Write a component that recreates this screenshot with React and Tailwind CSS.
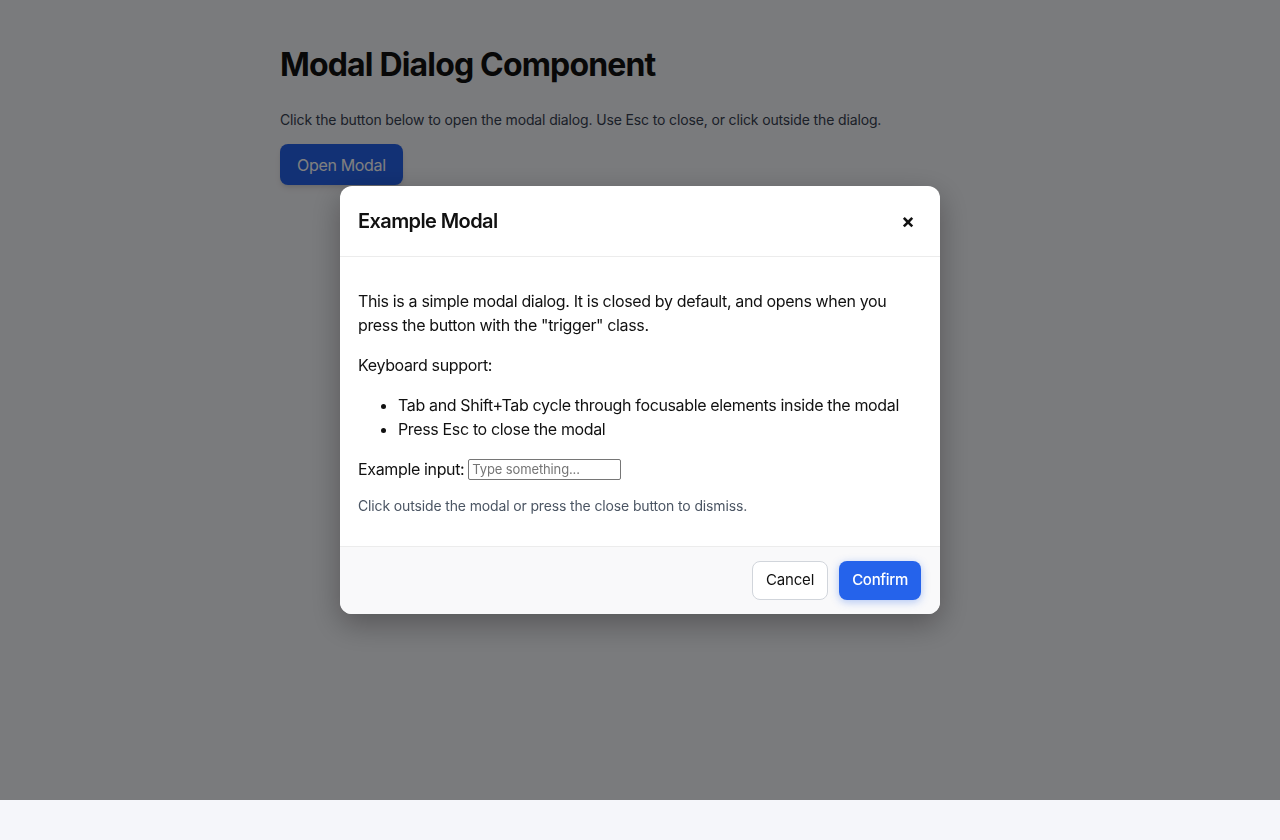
import { useState } from 'react';

const App = () => {
    const [open, setOpen] = useState(true);

    return (
        <div className="min-h-[840px] bg-[#f5f6fa] text-[#111] font-['Inter','Liberation_Sans',sans-serif]">
            {/* Page content */}
            <div className="w-[720px] mx-auto pt-[46px]">
                <h1 className="text-[32px] leading-[38px] font-bold tracking-[-0.026em] text-[#111]">
                    Modal Dialog Component
                </h1>
                <p className="mt-[26px] text-sm leading-5 tracking-[-0.01em] text-[#374151]">
                    Click the button below to open the modal dialog. Use Esc to close, or click outside the dialog.
                </p>
                <button
                    onClick={() => setOpen(true)}
                    className="mt-[14px] h-[41px] px-[17px] rounded-lg bg-[#2563eb] text-white text-base tracking-[-0.02em] shadow-md"
                >
                    Open Modal
                </button>
            </div>

            {/* Overlay */}
            {open && (
                <div
                    className="fixed top-0 left-0 right-0 h-[800px] bg-black/50 flex items-center justify-center"
                    onClick={() => setOpen(false)}
                >
                    <div
                        className="w-[600px] bg-white rounded-xl shadow-[0_10px_30px_rgba(0,0,0,0.3)] overflow-hidden"
                        onClick={(e) => e.stopPropagation()}
                    >
                        {/* Header */}
                        <div className="h-[71px] px-[18px] flex items-center justify-between border-b border-[#ececec]">
                            <h2 className="text-xl font-semibold leading-7 tracking-[-0.03em]">Example Modal</h2>
                            <button
                                onClick={() => setOpen(false)}
                                className="w-8 h-8 mr-[-2px] flex items-center justify-center text-xl font-bold leading-none"
                            >
                                ×
                            </button>
                        </div>

                        {/* Body */}
                        <div className="px-[18px] pt-8 pb-[30px] text-base leading-6 tracking-[-0.022em]">
                            <p>
                                This is a simple modal dialog. It is closed by default, and opens when you press the button with the "trigger" class.
                            </p>
                            <p className="mt-4">Keyboard support:</p>
                            <ul className="mt-4 pl-10 list-disc">
                                <li>Tab and Shift+Tab cycle through focusable elements inside the modal</li>
                                <li>Press Esc to close the modal</li>
                            </ul>
                            <div className="mt-4 flex items-center">
                                <label htmlFor="example-input">Example input:</label>
                                <input
                                    id="example-input"
                                    type="text"
                                    placeholder="Type something..."
                                    className="ml-1 w-[153px] h-[21px] px-[3px] border border-[#767676] rounded-[2px] text-[13px] tracking-[-0.01em] placeholder:text-[#757575]"
                                />
                            </div>
                            <p className="mt-[14px] text-sm leading-[21px] tracking-[-0.01em] text-[#4b5563]">
                                Click outside the modal or press the close button to dismiss.
                            </p>
                        </div>

                        {/* Footer */}
                        <div className="h-[68px] pl-[18px] pr-[19px] flex items-center justify-end gap-[11px] bg-[#f9f9fa] border-t border-[#ececec]">
                            <button
                                onClick={() => setOpen(false)}
                                className="h-[39px] px-[13px] rounded-lg border border-[#d1d5db] bg-white text-[15px] tracking-[-0.01em]"
                            >
                                Cancel
                            </button>
                            <button
                                onClick={() => setOpen(false)}
                                className="h-[39px] px-[13px] rounded-lg bg-[#2563eb] text-white text-[15px] font-medium tracking-[-0.02em] shadow-[0_2px_8px_rgba(37,99,235,0.35)]"
                            >
                                Confirm
                            </button>
                        </div>
                    </div>
                </div>
            )}
        </div>
    );
};

export default App;
